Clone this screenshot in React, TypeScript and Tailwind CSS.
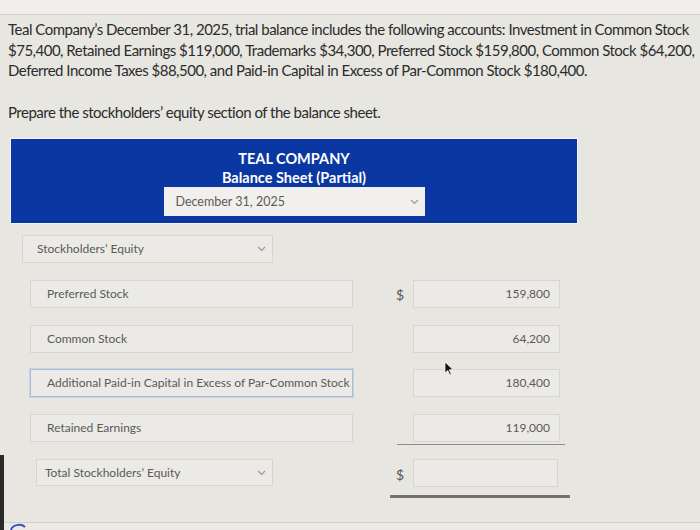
import React from 'react';

const Chevron = () => (
  <svg width="9" height="6" viewBox="0 0 9 6" fill="none" className="shrink-0">
    <path d="M1 1l3.5 3.5L8 1" stroke="#9a9a98" strokeWidth="1.2" />
  </svg>
);

const LabelBox = ({ text, focused }: { text: string; focused?: boolean }) => (
  <div
    className={
      'ml-[30px] w-[323px] h-[28px] flex items-center pl-[16px] text-[12px] text-[#5a5a58] bg-[#ebeae6] border ' +
      (focused ? 'border-[#aebbd6] shadow-[0_0_0_1px_#c9d3e6]' : 'border-[#d6d5d0]')
    }
  >
    {text}
  </div>
);

const ValueBox = ({ value }: { value?: string }) => (
  <div className="w-[147px] h-[28px] flex items-center justify-end pr-[9px] text-[12px] text-[#5a5a58] bg-[#ebeae6] border border-[#d6d5d0]">
    {value}
  </div>
);

const Dollar = ({ show }: { show?: boolean }) => (
  <div className="w-[60px] pr-[9px] text-right text-[14px] text-[#555553]">{show ? '$' : ''}</div>
);

const App = () => {
  return (
    <div className="relative w-[700px] h-[530px] overflow-hidden bg-[#e7e6e1] font-['Lato',sans-serif]">
      <div className="h-[15px] bg-[#f0efeb] border-b border-[#d3d2cd]" />

      <div className="pl-[8px] pt-[4px] text-[15px] leading-[20.5px] text-[#2c2c2b] tracking-[-0.5px] whitespace-nowrap">
        <div>Teal Company’s December 31, 2025, trial balance includes the following accounts: Investment in Common Stock</div>
        <div>$75,400, Retained Earnings $119,000, Trademarks $34,300, Preferred Stock $159,800, Common Stock $64,200,</div>
        <div>Deferred Income Taxes $88,500, and Paid-in Capital in Excess of Par-Common Stock $180,400.</div>
        <div className="mt-[21px]">Prepare the stockholders’ equity section of the balance sheet.</div>
      </div>

      <div className="ml-[11px] mt-[17px] w-[566px] h-[84px] bg-[#0b37a2] shadow-[0_0_0_1px_#f3f3f0] flex flex-col items-center pt-[10px] text-white font-bold text-[14.5px] leading-[19px]">
        <div>TEAL COMPANY</div>
        <div>Balance Sheet (Partial)</div>
        <div className="w-[261px] h-[29px] bg-[#f1f0ec] flex items-center justify-between pl-[12px] pr-[6px] font-normal text-[12.5px] text-[#5b5b59]">
          <span>December 31, 2025</span>
          <Chevron />
        </div>
      </div>

      <div className="ml-[22px] mt-[12px] w-[251px] h-[28px] flex items-center justify-between pl-[14px] pr-[6px] bg-[#ebeae6] border border-[#d6d5d0] text-[12px] text-[#5a5a58]">
        <span>Stockholders’ Equity</span>
        <Chevron />
      </div>

      <div className="mt-[17px] flex items-center">
        <LabelBox text="Preferred Stock" />
        <Dollar show />
        <ValueBox value="159,800" />
      </div>

      <div className="mt-[17px] flex items-center">
        <LabelBox text="Common Stock" />
        <Dollar />
        <ValueBox value="64,200" />
      </div>

      <div className="mt-[16px] flex items-center">
        <LabelBox text="Additional Paid-in Capital in Excess of Par-Common Stock" focused />
        <Dollar />
        <ValueBox value="180,400" />
      </div>

      <div className="mt-[17px] flex items-start">
        <LabelBox text="Retained Earnings" />
        <Dollar />
        <div className="flex flex-col">
          <ValueBox value="119,000" />
          <div className="mt-[2px] -ml-[16px] w-[168px] h-px bg-[#8c8c8a]" />
        </div>
      </div>

      <div className="mt-[14px] flex items-start">
        <div className="ml-[36px] w-[237px] h-[27px] flex items-center justify-between pl-[8px] pr-[6px] bg-[#ebeae6] border border-[#d6d5d0] text-[12px] text-[#5a5a58]">
          <span>Total Stockholders’ Equity</span>
          <Chevron />
        </div>
        <div className="w-[140px] pr-[9px] pt-[5px] text-right text-[14px] text-[#555553]">$</div>
        <div className="flex flex-col">
          <div className="w-[145px] h-[28px] bg-[#ebeae6] border border-[#d6d5d0]" />
          <div className="mt-[8px] -ml-[23px] w-[180px] h-[3px] bg-[#737371]" />
        </div>
      </div>

      <div className="mt-[24px] h-px bg-[#d0cfca]" />
      <div className="h-[10px] bg-[#eceae6]" />

      {/* screen bezel edge at the bottom left */}
      <div className="absolute left-0 top-[455px] w-[4px] h-[75px] bg-[#2b2a29]" />
      <svg className="absolute left-[9px] top-[523px]" width="18" height="7" viewBox="0 0 18 7">
        <path d="M2 7 C3 2, 12 0, 16 4" stroke="#3b4fc4" strokeWidth="2" fill="none" />
      </svg>

      {/* mouse pointer */}
      <svg className="absolute left-[444px] top-[361px]" width="10" height="15" viewBox="0 0 10 15">
        <path d="M1 1 L1 12 L3.8 9.4 L5.8 14 L7.3 13.3 L5.4 8.8 L9 8.6 Z" fill="#111" stroke="#f4f4f4" strokeWidth="0.8" />
      </svg>
    </div>
  );
};

export default App;
